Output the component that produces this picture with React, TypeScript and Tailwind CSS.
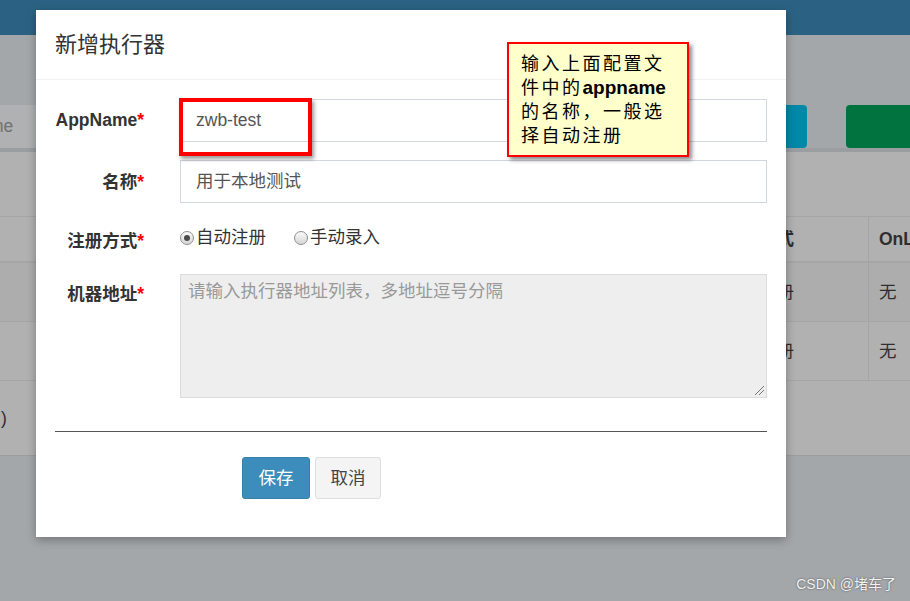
import React from 'react';

const sans = "font-['Liberation_Sans','Noto_Sans_CJK_SC',sans-serif]";

const Label: React.FC<{ text: string; top?: string }> = ({ text, top = 'pt-[8px]' }) => (
  <div className={`w-[89px] shrink-0 ${top} text-right text-[17.5px] font-bold leading-[25px] text-[#333]`}>
    {text}
    <span className="text-[#ff0000]">*</span>
  </div>
);

const Radio: React.FC<{ checked?: boolean; text: string }> = ({ checked, text }) => (
  <label className="flex items-center">
    <span className="flex h-[14px] w-[14px] items-center justify-center rounded-full border border-[#8e8f8f] bg-gradient-to-b from-[#fafafa] to-[#d6d6d6]">
      {checked && <span className="h-[6px] w-[6px] rounded-full bg-[#4a4a4a]" />}
    </span>
    <span className="ml-[2px] text-[17.5px] leading-[25px] text-[#333]">{text}</span>
  </label>
);

const Row: React.FC<{ mid: string; last: string; className: string }> = ({ mid, last, className }) => (
  <div className={`flex overflow-hidden whitespace-nowrap text-[17.5px] text-[#2e2e2e] ${className}`}>
    <div className="w-[713px] shrink-0" />
    <div className="flex w-[155px] shrink-0 items-center border-l border-[#a5a5a5] px-[10px]">{mid}</div>
    <div className="flex min-w-0 flex-1 items-center border-l border-[#a5a5a5] px-[10px]">{last}</div>
  </div>
);

export default function App() {
  return (
    <div className={`relative h-[601px] w-[910px] overflow-hidden bg-[#a4a7aa] ${sans}`}>
      {/* page behind the backdrop */}
      <div className="h-[35px] bg-[#2b6283]" />
      <div className="pt-[70px]">
        <div className="flex h-[43px]">
          <div className="flex w-[120px] items-center overflow-hidden bg-[#b0b1b2]">
            <span className="-ml-[11px] text-[17.5px] text-[#6f7173]">me</span>
          </div>
          <div className="flex-1" />
          <div className="w-[87px] rounded-[4px] bg-[#0088a9]" />
          <div className="ml-[39px] w-[64px] rounded-l-[4px] bg-[#00733e]" />
        </div>
        <div className="border-t-[4px] border-[#9b9ea1] bg-[#b1b1b1]">
          <div className="h-[64px]" />
          <Row mid="注册方式" last="OnLine 机器地址" className="h-[47px] border-t border-b-[2px] border-[#a5a5a5] font-bold" />
          <Row mid="自动注册" last="无" className="h-[59px] border-b border-[#a5a5a5] bg-[#adadad]" />
          <Row mid="自动注册" last="无" className="h-[59px] border-b border-[#a5a5a5]" />
          <div className="flex h-[75px] items-center border-b border-[#9c9c9c] pl-[1px] text-[17.5px] text-[#2e2e2e]">)</div>
        </div>
      </div>

      {/* modal */}
      <div className="absolute left-[36px] top-[10px] h-[527px] w-[750px] bg-white shadow-[0_3px_9px_rgba(0,0,0,0.3)]">
        <div className="flex h-[70px] items-center border-b border-[#f2f2f2] px-[19px]">
          <h4 className="text-[22px] font-normal text-[#333]">新增执行器</h4>
        </div>
        <div className="px-[19px] pt-[19px]">
          <div className="flex">
            <Label text="AppName" top="pt-[9px]" />
            <div className="ml-[36px] flex h-[43px] flex-1 items-center border border-[#d2d6de] px-[15px] text-[17.5px] text-[#555]">zwb-test</div>
          </div>
          <div className="mt-[18px] flex">
            <Label text="名称" top="pt-[10px]" />
            <div className="ml-[36px] flex h-[43px] flex-1 items-center border border-[#d2d6de] px-[15px] text-[17.5px] text-[#555]">用于本地测试</div>
          </div>
          <div className="mt-[18px] flex h-[35px]">
            <Label text="注册方式" />
            <div className="ml-[36px] flex items-start gap-[28px] pt-[4px]">
              <Radio checked text="自动注册" />
              <Radio text="手动录入" />
            </div>
          </div>
          <div className="mt-[18px] flex">
            <Label text="机器地址" />
            <div className="relative ml-[36px] h-[124px] flex-1 border border-[#dcdcdc] bg-[#eeeeee] px-[7px] pt-[4px] text-[17.5px] leading-[25px] text-[#999]">
              请输入执行器地址列表，多地址逗号分隔
              <svg className="absolute bottom-[1px] right-[1px]" width="12" height="12" viewBox="0 0 12 12">
                <path d="M11 2 L2 11 M11 6 L6 11" stroke="#777" strokeWidth="1" />
              </svg>
            </div>
          </div>
          <div className="mt-[33px] border-t border-[#555]" />
          <div className="ml-[187px] mt-[25px] flex gap-[5px]">
            <button className="h-[42px] w-[68px] rounded-[3px] border border-[#367fa9] bg-[#3c8dbc] text-[17.5px] text-white">保存</button>
            <button className="h-[42px] w-[66px] rounded-[3px] border border-[#dddddd] bg-[#f4f4f4] text-[17.5px] text-[#444]">取消</button>
          </div>
        </div>

        {/* red highlight box */}
        <div className="absolute left-[143px] top-[88px] h-[58px] w-[133px] border-[4px] border-[#ff0000] shadow-[2px_3px_4px_rgba(0,0,0,0.4)]" />

        {/* callout note */}
        <div className="absolute left-[471px] top-[32px] h-[115px] w-[182px] border-2 border-[#ff0000] bg-[#ffffcc] pl-[12px] pt-[8px] text-[18px] leading-[24px] text-black shadow-[3px_3px_4px_rgba(0,0,0,0.45)]">
          <div className="tracking-[2.5px]">输入上面配置文</div>
          <div>
            <span className="tracking-[2.5px]">件中的</span>
            <span className="text-[19px] font-bold">appname</span>
          </div>
          <div className="tracking-[2.5px]">的名称，一般选</div>
          <div className="tracking-[2.5px]">择自动注册</div>
        </div>
      </div>

      {/* watermark */}
      <div className="absolute right-[14px] top-[574px] text-[14px] text-[#f2f2f2] [text-shadow:0_0_2px_rgba(0,0,0,0.6)]">
        CSDN @堵车了
      </div>
    </div>
  );
}
